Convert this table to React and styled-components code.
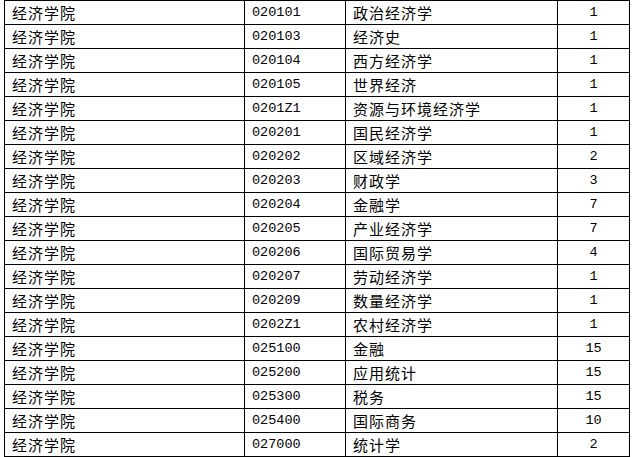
import React from "react";
import styled, { createGlobalStyle } from "styled-components";

const Global = createGlobalStyle`
  html, body { margin: 0; padding: 0; background: #fff; }
`;

const Page = styled.div`
  padding-left: 4px;
  background: #fff;
`;

const Grid = styled.div`
  display: grid;
  grid-template-columns: 240px 101px 212px 72px;
  grid-auto-rows: 24px;
  width: 625px;
  border-left: 1px solid #000;
  border-top: 1px solid #000;
  color: #000;
`;

const Cell = styled.div`
  box-sizing: border-box;
  border-right: 1px solid #000;
  border-bottom: 1px solid #000;
  display: flex;
  align-items: center;
  justify-content: ${(p) => (p.$center ? "center" : "flex-start")};
  padding-left: ${(p) => (p.$center ? 0 : 7)}px;
  white-space: nowrap;
  overflow: hidden;
  line-height: 1;
  font-family: ${(p) =>
    p.$mono ? '"Liberation Mono", monospace' : '"Noto Sans CJK SC", sans-serif'};
  font-size: ${(p) => (p.$mono ? "13.5px" : "15px")};
  letter-spacing: ${(p) => (p.$mono ? "0" : "1px")};
  font-weight: 400;
`;

const rows = [
  ["020101", "政治经济学", "1"],
  ["020103", "经济史", "1"],
  ["020104", "西方经济学", "1"],
  ["020105", "世界经济", "1"],
  ["0201Z1", "资源与环境经济学", "1"],
  ["020201", "国民经济学", "1"],
  ["020202", "区域经济学", "2"],
  ["020203", "财政学", "3"],
  ["020204", "金融学", "7"],
  ["020205", "产业经济学", "7"],
  ["020206", "国际贸易学", "4"],
  ["020207", "劳动经济学", "1"],
  ["020209", "数量经济学", "1"],
  ["0202Z1", "农村经济学", "1"],
  ["025100", "金融", "15"],
  ["025200", "应用统计", "15"],
  ["025300", "税务", "15"],
  ["025400", "国际商务", "10"],
  ["027000", "统计学", "2"],
];

export default function App() {
  return (
    <Page>
      <Global />
      <Grid>
        {rows.map(([code, name, n]) => (
          <React.Fragment key={code}>
            <Cell>经济学院</Cell>
            <Cell $mono>{code}</Cell>
            <Cell>{name}</Cell>
            <Cell $mono $center>{n}</Cell>
          </React.Fragment>
        ))}
      </Grid>
    </Page>
  );
}
